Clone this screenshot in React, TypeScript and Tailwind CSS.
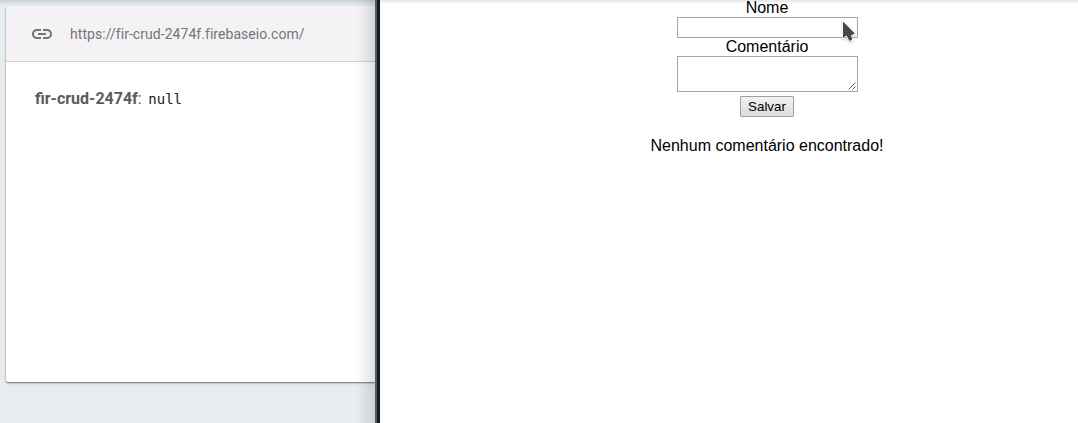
function LinkIcon() {
  return (
    <svg className="h-6 w-6 shrink-0" viewBox="0 0 24 24" fill="#757575">
      <path d="M3.9 12c0-1.71 1.39-3.1 3.1-3.1h4V7H7c-2.76 0-5 2.24-5 5s2.24 5 5 5h4v-1.9H7c-1.71 0-3.1-1.39-3.1-3.1zM8 13h8v-2H8v2zm9-6h-4v1.9h4c1.71 0 3.1 1.39 3.1 3.1s-1.39 3.1-3.1 3.1h-4V17h4c2.76 0 5-2.24 5-5s-2.24-5-5-5z" />
    </svg>
  );
}

function DatabasePanel() {
  return (
    <section className="relative h-full w-[375px] shrink-0 overflow-hidden bg-[#e7ecef] pt-1.5 pl-1.5 font-['Roboto',sans-serif]">
      <div className="h-[376px] rounded-l-[2px] bg-white shadow-[0_1px_2px_rgba(0,0,0,0.55)]">
        <header className="flex h-14 items-center rounded-tl-[2px] border-b border-[#d2d1d3] bg-[#f4f2f5] pl-6">
          <LinkIcon />
          <span className="ml-4 text-sm tracking-[0.05px] text-[#757575]">https://fir-crud-2474f.firebaseio.com/</span>
        </header>
        <div className="flex items-baseline pt-[25px] pl-[29px] text-base leading-6 text-[#5c5c5c]">
          <span className="font-bold">fir-crud-2474f</span>
          <span>:</span>
          <span className="ml-[6.6px] font-['DejaVu_Sans_Mono',monospace] text-sm text-[#212121]">null</span>
        </div>
      </div>
      <div className="absolute inset-y-0 right-0 w-[18px] bg-gradient-to-r from-transparent to-black/12" />
    </section>
  );
}

function CommentForm() {
  return (
    <main className="flex flex-1 flex-col items-center bg-white pr-[4px] pl-[80px] font-['Liberation_Sans',Arial,sans-serif] text-base leading-[18px] text-black">
      <label htmlFor="nome" className="-mt-px">Nome</label>
      <div className="relative h-[21px] w-[181px]">
        <input id="nome" className="block h-[21px] w-[181px] border border-[#a6a6a6] bg-white px-1 text-[13px] outline-none" />
        <svg className="absolute top-[3px] left-[164px] h-[24px] w-[16px] drop-shadow-[0_1px_1px_rgba(0,0,0,0.25)]" viewBox="0 0 16 24">
          <path d="M2 1.5v16.5l3.5-2.5 3 5.5 2.8-1.5-1.3-4 3.8-2z" fill="#454547" stroke="white" strokeWidth="1.6" paintOrder="stroke" />
        </svg>
      </div>
      <label htmlFor="comentario">Comentário</label>
      <div className="relative h-9 w-[181px]">
        <textarea id="comentario" className="block h-9 w-[181px] resize-none border border-[#a6a6a6] bg-white p-0.5 text-[13px] outline-none" />
        <svg className="pointer-events-none absolute right-[2px] bottom-[2px] h-2 w-2" viewBox="0 0 8 8" stroke="#555" strokeWidth="0.9">
          <path d="M0.5 7.5l7-7M4.5 7.5l3-3" />
        </svg>
      </div>
      <button className="mt-1 h-[21px] w-[54px] rounded-[1px] border border-[#a0a0a0] bg-gradient-to-b from-[#f3f3f3] to-[#dcdcdc] text-[13.333px] leading-[19px]">Salvar</button>
      <p className="mt-5">Nenhum comentário encontrado!</p>
    </main>
  );
}

export default function App() {
  return (
    <div className="relative flex h-[423px] w-[1078px] overflow-hidden bg-white">
      <DatabasePanel />
      <div className="w-[5px] shrink-0 border-l-2 border-[#555c60] bg-[#101c23]" />
      <CommentForm />
      <div className="pointer-events-none absolute top-0 left-0 h-[5px] w-[375px] bg-gradient-to-b from-black/12 to-transparent" />
      <div className="pointer-events-none absolute top-0 right-0 h-[4px] w-[698px] bg-gradient-to-b from-black/10 to-transparent" />
    </div>
  );
}
